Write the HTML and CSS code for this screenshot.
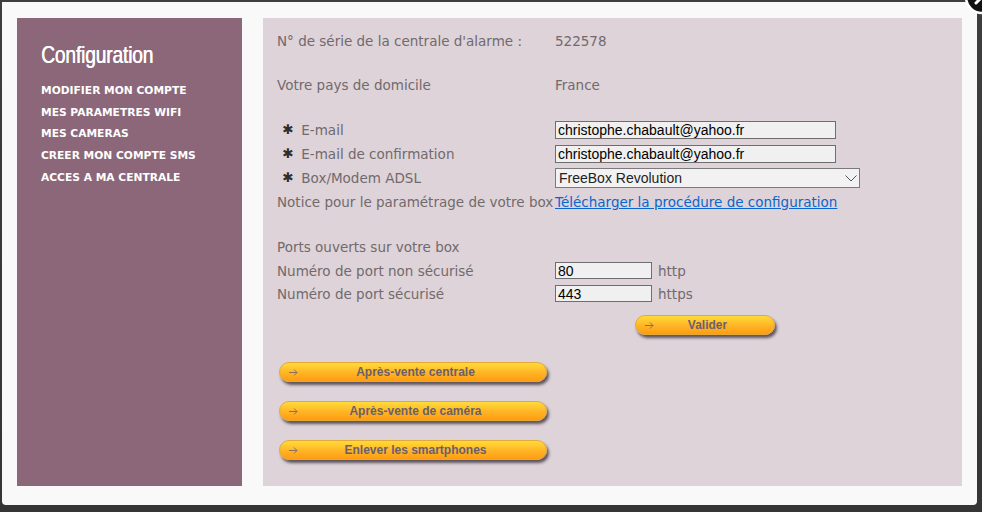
FILE: index.html
```html
<!DOCTYPE html>
<html lang="fr">
<head>
<meta charset="utf-8">
<title>Configuration</title>
<link rel="stylesheet" href="styles.css">
</head>
<body>
<div class="modal">
  <aside class="side">
    <h1 class="title">Configuration</h1>
    <ul class="menu">
      <li>MODIFIER MON COMPTE</li>
      <li>MES PARAMETRES WIFI</li>
      <li>MES CAMERAS</li>
      <li>CREER MON COMPTE SMS</li>
      <li>ACCES A MA CENTRALE</li>
    </ul>
  </aside>
  <main class="panel">
    <div class="row"><span>N° de série de la centrale d'alarme :</span><span>522578</span></div>
    <div class="row sp20"><span>Votre pays de domicile</span><span>France</span></div>
    <div class="row sp21"><span class="req"><i class="star">✱</i>E-mail</span><input class="field email" type="text" value="christophe.chabault@yahoo.fr"></div>
    <div class="row"><span class="req"><i class="star">✱</i>E-mail de confirmation</span><input class="field email" type="text" value="christophe.chabault@yahoo.fr"></div>
    <div class="row"><span class="req"><i class="star">✱</i>Box/Modem ADSL</span>
      <div class="selwrap"><select class="sel"><option>FreeBox Revolution</option></select><svg class="chev" width="12" height="7" viewBox="0 0 12 7"><path d="M0.5 0.5 L6 6 L11.5 0.5" fill="none" stroke="#555" stroke-width="1"/></svg></div>
    </div>
    <div class="row"><span>Notice pour le paramétrage de votre box</span><a class="link" href="#">Télécharger la procédure de configuration</a></div>
    <div class="row sp21"><span>Ports ouverts sur votre box</span><span></span></div>
    <div class="row port"><span>Numéro de port non sécurisé</span><span class="pcell"><input class="field pnum" type="text" value="80"><span>http</span></span></div>
    <div class="row port"><span>Numéro de port sécurisé</span><span class="pcell"><input class="field pnum" type="text" value="443"><span>https</span></span></div>
    <button class="btn valider" type="button"><svg class="arr" width="9" height="7" viewBox="0 0 9 7"><path d="M0 3.5 H8 M5 0.5 L8 3.5 L5 6.5" fill="none" stroke="#8b6f5a" stroke-width="1"/></svg>Valider</button>
    <div class="btns">
      <button class="btn wide" type="button"><svg class="arr" width="9" height="7" viewBox="0 0 9 7"><path d="M0 3.5 H8 M5 0.5 L8 3.5 L5 6.5" fill="none" stroke="#8b6f5a" stroke-width="1"/></svg>Après-vente centrale</button>
      <button class="btn wide" type="button"><svg class="arr" width="9" height="7" viewBox="0 0 9 7"><path d="M0 3.5 H8 M5 0.5 L8 3.5 L5 6.5" fill="none" stroke="#8b6f5a" stroke-width="1"/></svg>Après-vente de caméra</button>
      <button class="btn wide" type="button"><svg class="arr" width="9" height="7" viewBox="0 0 9 7"><path d="M0 3.5 H8 M5 0.5 L8 3.5 L5 6.5" fill="none" stroke="#8b6f5a" stroke-width="1"/></svg>Enlever les smartphones</button>
    </div>
  </main>
</div>
<svg class="close" width="40" height="40" viewBox="0 0 40 40"><circle cx="20" cy="20" r="16" fill="#111" stroke="#fff" stroke-width="2.5"/><path d="M14 14 L26 26 M26 14 L14 26" stroke="#fff" stroke-width="3" stroke-linecap="round"/></svg>
</body>
</html>
```
FILE: styles.css
```css
html, body {
  margin: 0;
  height: 100%;
  overflow: hidden;
}
body {
  position: relative;
  background: linear-gradient(#3e3e3e, #353535);
}
.modal {
  margin: 2px 0 0 2px;
  width: 975px;
  height: 503px;
  box-sizing: border-box;
  background: #f9f9f9;
  border-radius: 0 0 4px 4px;
  padding: 16px 15px 19px;
  display: flex;
  gap: 21px;
}
.side {
  width: 225px;
  flex: none;
  background: #8b6779;
  padding: 24px 0 0 24px;
  box-sizing: border-box;
}
.title {
  margin: 0 0 12px;
  font: normal 24px/26px "Liberation Sans", Arial, sans-serif;
  color: #fff;
  transform: scaleX(0.8);
  transform-origin: left center;
  white-space: nowrap;
  letter-spacing: -0.2px;
  text-shadow: 0.5px 0 0 #fff;
}
.menu {
  list-style: none;
  margin: 0;
  padding: 0;
}
.menu li {
  font: bold 10.7px/21.7px "DejaVu Sans", Verdana, sans-serif;
  color: #fff;
  white-space: nowrap;
}
.panel {
  width: 699px;
  flex: none;
  background: #ded3d8;
  padding: 11px 14px;
  box-sizing: border-box;
  font: 13.5px "DejaVu Sans", Verdana, sans-serif;
  color: #716a6d;
}
.row {
  display: grid;
  grid-template-columns: 278px auto;
  align-items: center;
  height: 24px;
  white-space: nowrap;
}
.row.port { height: 23px; }
.sp20 { margin-top: 20px; }
.sp21 { margin-top: 21px; }
.req { padding-left: 5px; }
.star {
  font-style: normal;
  font-size: 13.5px;
  color: #2e2e2e;
  margin-right: 8px;
  position: relative;
  top: -1px;
}
.field {
  box-sizing: border-box;
  margin: 0;
  height: 18px;
  border: 1px solid #6e6e6e;
  background: #f0f0f0;
  font: 14px "Liberation Sans", Arial, sans-serif;
  color: #000;
  padding: 0 2px;
  outline: none;
}
.email { width: 281px; }
.pnum { width: 97px; height: 17px; }
.pcell {
  display: flex;
  align-items: center;
  gap: 6px;
}
.selwrap {
  position: relative;
  width: 305px;
  height: 20px;
}
.sel {
  appearance: none;
  -webkit-appearance: none;
  box-sizing: border-box;
  width: 305px;
  height: 20px;
  margin: 0;
  border: 1px solid #7a7a7a;
  border-radius: 0;
  background: #f2f2f2;
  font: 14px "Liberation Sans", Arial, sans-serif;
  color: #222;
  padding: 0 0 0 3px;
  outline: none;
}
.chev {
  position: absolute;
  right: 3px;
  top: 7px;
  pointer-events: none;
}
.link {
  color: #0a66cc;
  text-decoration: underline;
}
.btn {
  position: relative;
  display: block;
  box-sizing: border-box;
  height: 20px;
  margin: 0;
  padding: 0 0 0 5px;
  border: 1px solid #e4a838;
  border-radius: 10px;
  background: linear-gradient(#ffdb3a, #ffb425 55%, #ff9c12);
  box-shadow: 2px 3px 3px rgba(40, 30, 40, 0.7);
  font: bold 12px/18px "Liberation Sans", Arial, sans-serif;
  color: #6b5f6d;
  text-align: center;
  cursor: pointer;
}
.arr {
  position: absolute;
  left: 9px;
  top: 6px;
}
.valider {
  width: 140px;
  margin: 10px 0 0 358px;
}
.btns {
  margin: 27px 0 0 2px;
  display: flex;
  flex-direction: column;
  gap: 19px;
}
.wide { width: 268px; }
.close {
  position: absolute;
  left: 962px;
  top: -23px;
}
```
